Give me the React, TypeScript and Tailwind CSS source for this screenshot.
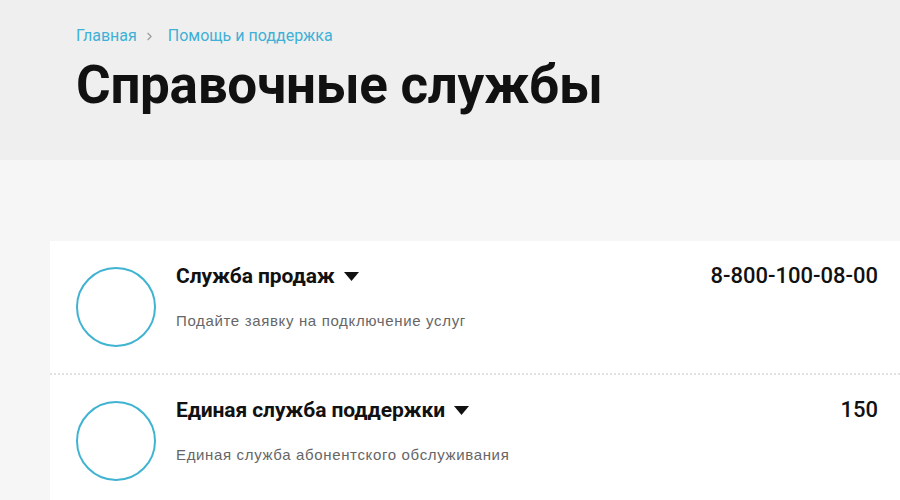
import { ChevronRight } from "lucide-react"

interface Service {
  title: string
  subtitle: string
  phone: string
}

const services: Service[] = [
  { title: "Служба продаж", subtitle: "Подайте заявку на подключение услуг", phone: "8-800-100-08-00" },
  { title: "Единая служба поддержки", subtitle: "Единая служба абонентского обслуживания", phone: "150" },
]

function ServiceRow({ item, last }: { item: Service; last: boolean }) {
  return (
    <div className={`flex pl-[26px] pr-[22px] ${last ? "" : "border-b-2 border-dotted border-[#e2e2e2]"} h-[134px]`}>
      <div className="mt-[26px] w-[80px] h-[80px] rounded-full border-2 border-[#3fb3d1] shrink-0" />
      <div className="ml-[20px] flex-1 pt-[20px]">
        <div className="flex items-center gap-[9px] text-[21px] font-bold text-[#111] leading-[30px] tracking-[-0.1px]">
          {item.title}
          <svg width="15" height="10" viewBox="0 0 15 10" className="mt-[1px]">
            <path d="M0 0h15L7.5 9z" fill="#111" />
          </svg>
        </div>
        <div className="mt-[21px] text-[15px] tracking-[0.65px] text-[#666] font-['Liberation_Sans',sans-serif] leading-[18px]">
          {item.subtitle}
        </div>
      </div>
      <div className="pt-[20px] text-[22px] font-medium text-[#111] leading-[30px]">{item.phone}</div>
    </div>
  )
}

export default function App() {
  return (
    <div className="w-[900px] h-[500px] overflow-hidden bg-[#f6f6f6] font-['Roboto',sans-serif]">
      {/* Header */}
      <div className="h-[160px] bg-[#efefef] pl-[76px] pt-[24px]">
        <div className="flex items-center text-[16px] text-[#3fb0d6]">
          <span>Главная</span>
          <ChevronRight className="mx-[6px] w-[13px] h-[13px] text-[#999]" strokeWidth={2} />
          <span className="ml-[6px]">Помощь и поддержка</span>
        </div>
        <h1 className="mt-[6px] text-[53px] font-bold text-[#111] leading-[62px] tracking-[-0.3px]">
          Справочные службы
        </h1>
      </div>

      {/* List */}
      <div className="pt-[81px] pl-[50px]">
        <div className="bg-white">
          {services.map((s, i) => (
            <ServiceRow key={s.title} item={s} last={i === services.length - 1} />
          ))}
        </div>
      </div>
    </div>
  )
}
